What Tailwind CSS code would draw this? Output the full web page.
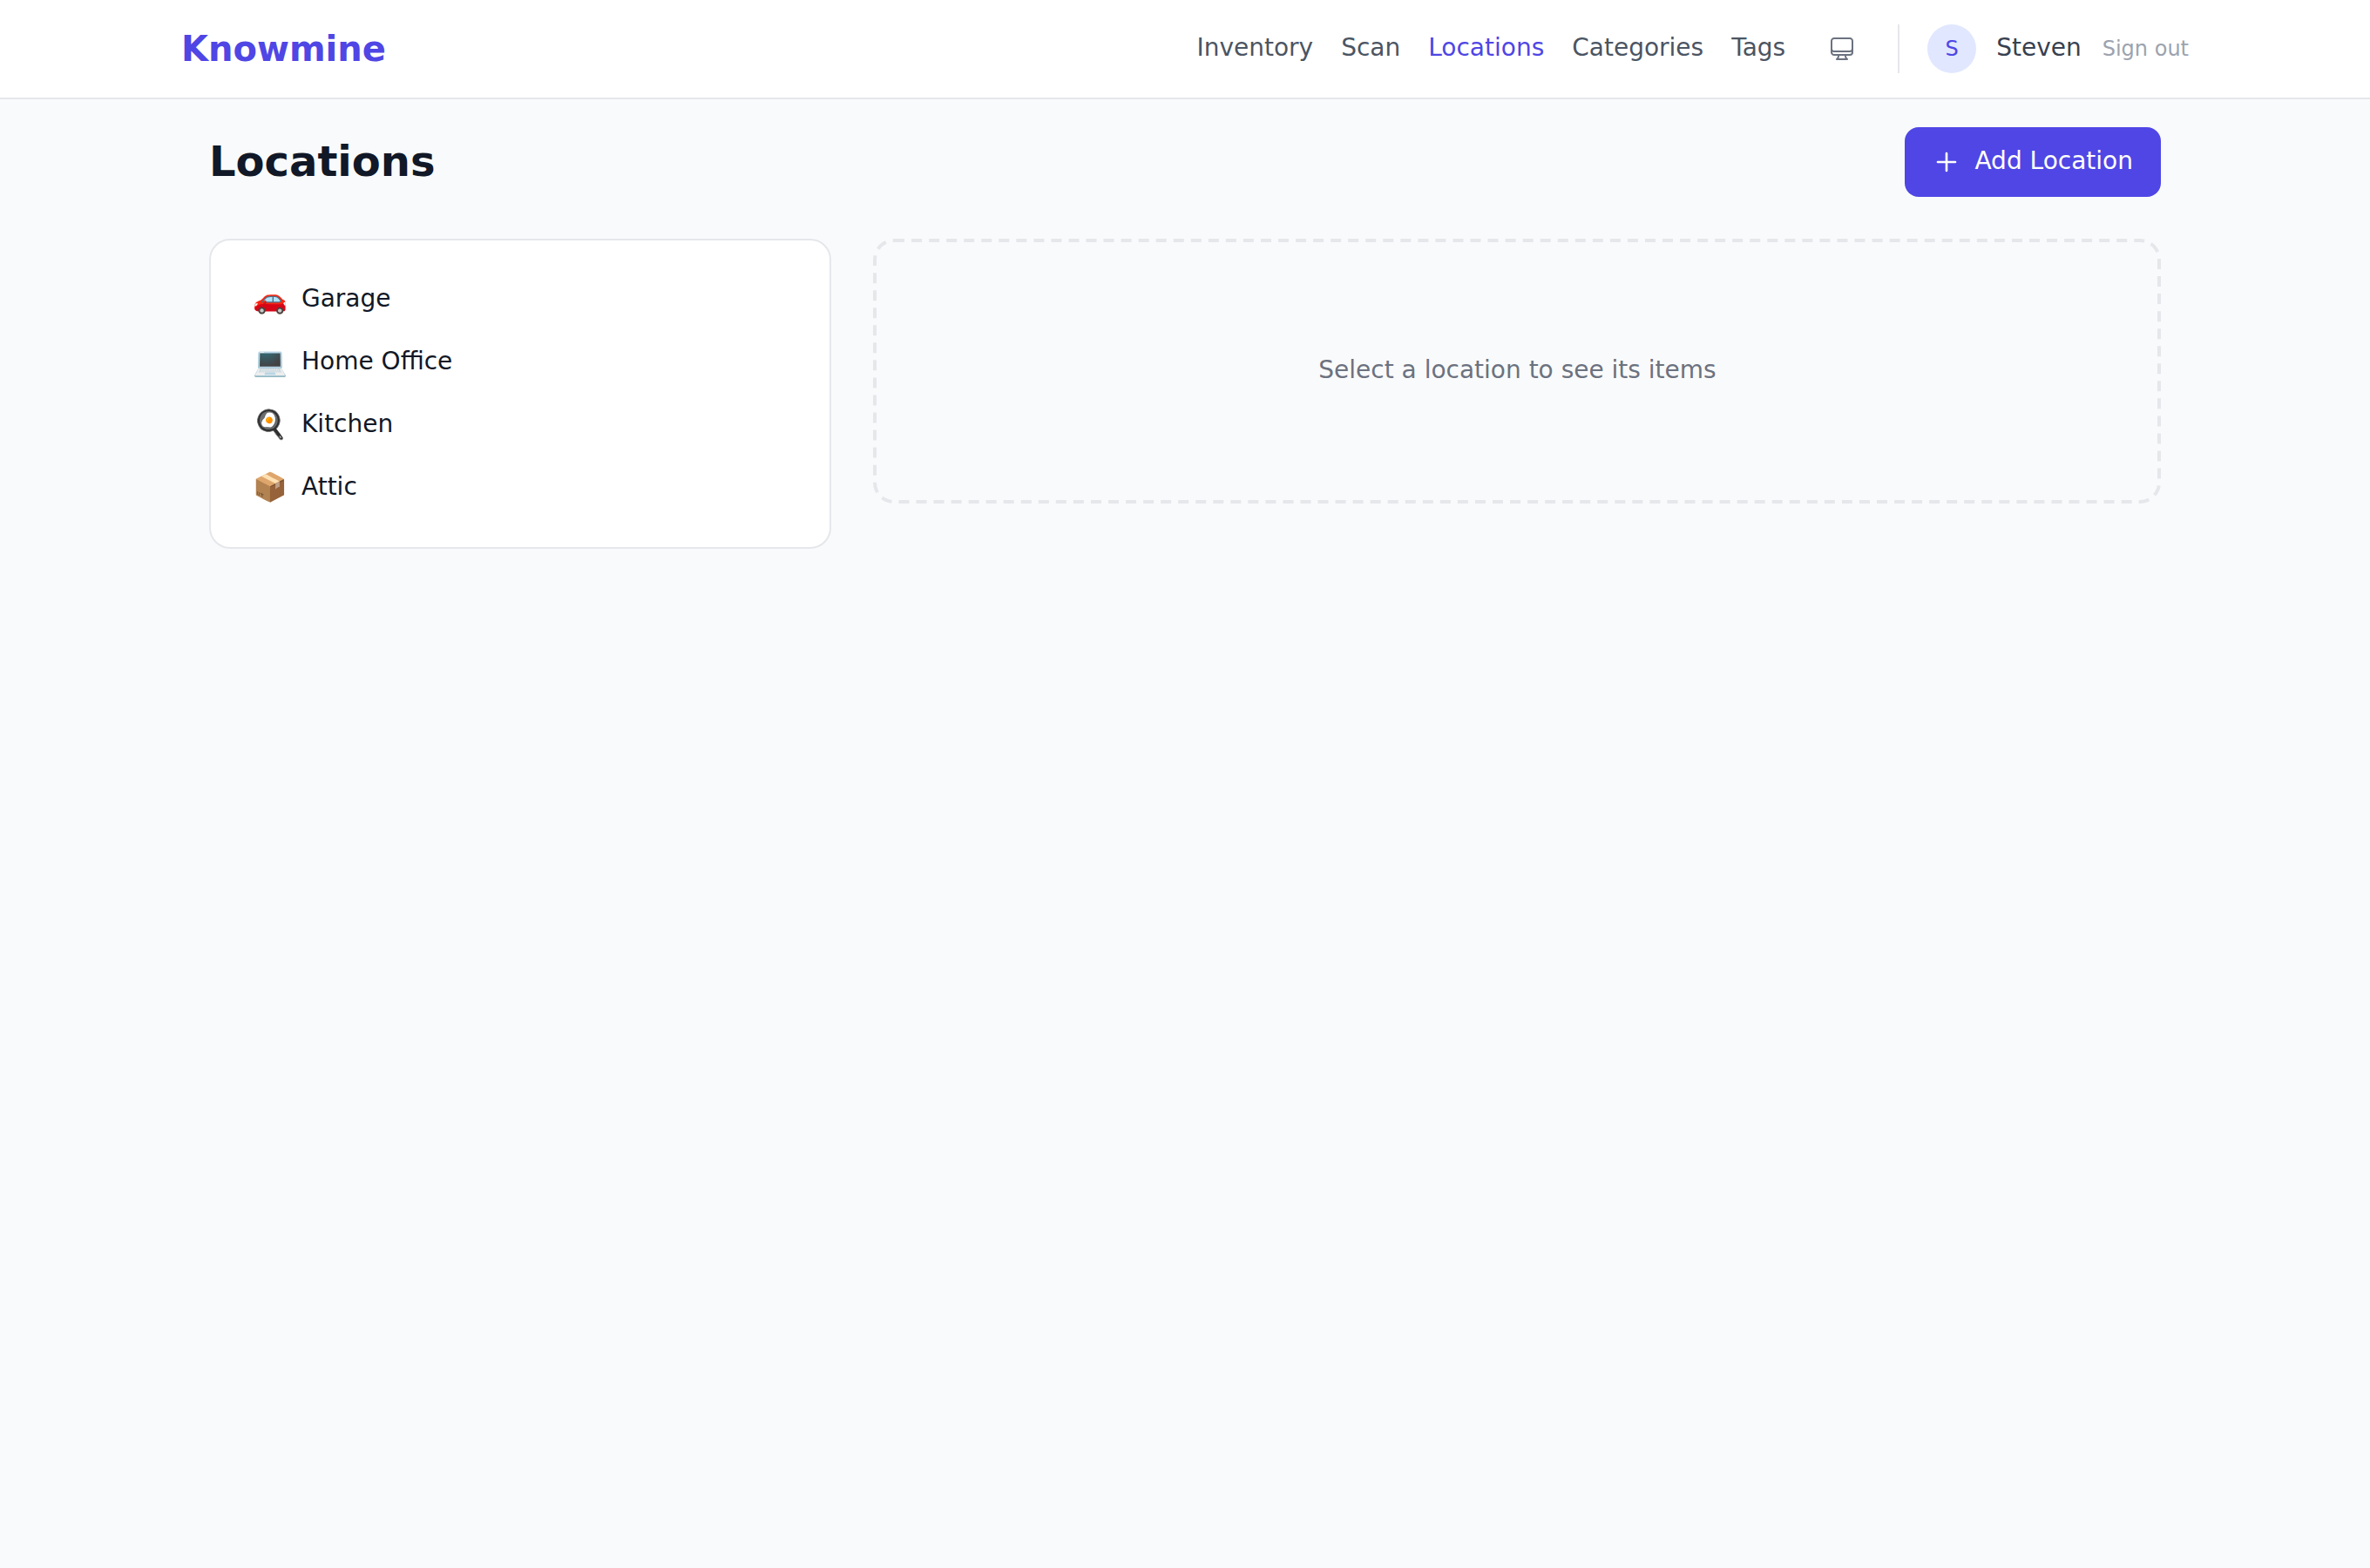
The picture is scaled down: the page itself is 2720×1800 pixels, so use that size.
<!DOCTYPE html>
<html lang="en">
<head>
<meta charset="utf-8">
<title>Knowmine</title>
<script src="https://cdn.jsdelivr.net/npm/@tailwindcss/browser@4"></script>
</head>
<body class="min-h-screen bg-[#f9fafb] font-['DejaVu_Sans',sans-serif] text-[28px] leading-[40px] text-[#111827]">
  <nav class="border-b-2 border-[#e5e7eb] bg-white">
    <div class="mx-auto flex h-28 w-[2304px] items-center justify-between">
      <a class="text-[40px] leading-[56px] font-bold text-[#4f46e5]">Knowmine</a>
      <div class="flex items-center text-[#4b5563]">
        <div class="flex gap-8 pb-0.5">
          <a>Inventory</a>
          <a>Scan</a>
          <a class="text-[#4f46e5]">Locations</a>
          <a>Categories</a>
          <a>Tags</a>
        </div>
        <button class="ml-[33px] p-4 text-[#6b7280]" aria-label="Theme">
          <svg class="size-8" viewBox="0 0 24 24" fill="none" stroke="currentColor" stroke-width="1.5" stroke-linecap="round" stroke-linejoin="round"><path d="M9 17.25v1.007a3 3 0 0 1-.879 2.122L7.5 21h9l-.621-.621A3 3 0 0 1 15 18.257V17.25m6-12V15a2.25 2.25 0 0 1-2.25 2.25H5.25A2.25 2.25 0 0 1 3 15V5.25m18 0A2.25 2.25 0 0 0 18.75 3H5.25A2.25 2.25 0 0 0 3 5.25m18 0V12a2.25 2.25 0 0 1-2.25 2.25H5.25A2.25 2.25 0 0 1 3 12V5.25"/></svg>
        </button>
        <div class="ml-8 flex items-center border-l-2 border-[#e5e7eb] pl-8">
          <span class="flex size-14 items-center justify-center rounded-full bg-[#e0e7ff] text-2xl leading-8 text-[#4f46e5]">S</span>
          <span class="ml-[23px] pb-0.5 text-[#374151]">Steven</span>
          <button class="ml-6 text-2xl leading-8 text-[#9ca3af]">Sign out</button>
        </div>
      </div>
    </div>
  </nav>
  <main class="mx-auto w-[2304px] px-8 py-8">
    <div class="mb-12 flex items-center justify-between">
      <h1 class="pb-0.5 text-5xl leading-16 font-bold">Locations</h1>
      <button class="flex h-20 items-center gap-4 rounded-2xl bg-[#4f46e5] px-8 text-white">
        <svg class="size-8" viewBox="0 0 24 24" fill="none" stroke="currentColor" stroke-width="2" stroke-linecap="round" stroke-linejoin="round"><path d="M12 4.5v15m7.5-7.5h-15"/></svg>
        <span class="pb-0.5">Add Location</span>
      </button>
    </div>
    <div class="grid grid-cols-[714px_1478px] items-start gap-12">
      <ul class="rounded-3xl border-2 border-[#e5e7eb] bg-white p-8">
        <li class="flex h-18 items-center gap-4 px-4 pb-0.5"><span class="text-[32px] leading-12">🚗</span><span>Garage</span></li>
        <li class="flex h-18 items-center gap-4 px-4 pb-0.5"><span class="text-[32px] leading-12">💻</span><span>Home Office</span></li>
        <li class="flex h-18 items-center gap-4 px-4 pb-0.5"><span class="text-[32px] leading-12">🍳</span><span>Kitchen</span></li>
        <li class="flex h-18 items-center gap-4 px-4 pb-0.5"><span class="text-[32px] leading-12">📦</span><span>Attic</span></li>
      </ul>
      <div class="relative h-[304px] pt-[131px] pl-px text-center text-[#6b7280]">
        <!-- dashed outline, drawn at half size and doubled for longer dashes -->
        <div class="absolute top-0 left-0 h-1/2 w-1/2 origin-top-left scale-200 rounded-xl border-2 border-dashed border-[#e5e7eb]"></div>
        Select a location to see its items
      </div>
    </div>
  </main>
</body>
</html>
